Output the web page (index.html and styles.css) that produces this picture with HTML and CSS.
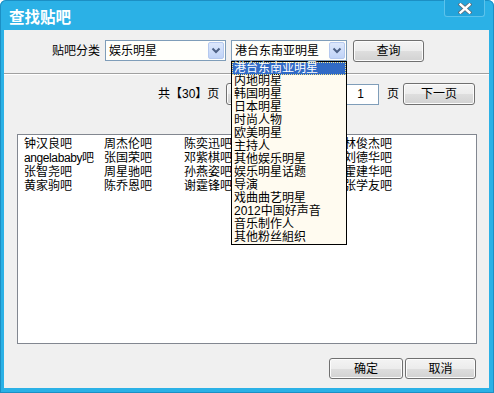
FILE: index.html
```html
<!DOCTYPE html>
<html lang="zh-CN">
<head>
<meta charset="utf-8">
<title>查找贴吧</title>
<link rel="stylesheet" href="styles.css">
</head>
<body>
<div class="window">
  <div class="titlebar">
    <span class="title">查找贴吧</span>
    <span class="close"><svg width="14" height="11" viewBox="0 0 14 11"><path d="M2.5 1.5 L11.5 9.5 M11.5 1.5 L2.5 9.5" stroke="#5a6b78" stroke-width="4" stroke-linecap="square"/><path d="M2.5 1.5 L11.5 9.5 M11.5 1.5 L2.5 9.5" stroke="#fff" stroke-width="2.4" stroke-linecap="square"/></svg></span>
  </div>
  <div class="client">
    <div class="row1">
      <span class="label">贴吧分类</span>
      <div class="combo combo1"><span class="combo-text">娱乐明星</span><span class="combo-btn"><svg width="10" height="7" viewBox="0 0 10 7"><path d="M1.5 1.5 L5 5 L8.5 1.5" fill="none" stroke="#4d6185" stroke-width="2"/></svg></span></div>
      <div class="combo combo2"><span class="combo-text">港台东南亚明星</span><span class="combo-btn"><svg width="10" height="7" viewBox="0 0 10 7"><path d="M1.5 1.5 L5 5 L8.5 1.5" fill="none" stroke="#4d6185" stroke-width="2"/></svg></span></div>
      <button class="btn btn-query">查询</button>
    </div>
    <div class="sep"></div>
    <div class="row2">
      <span class="pages">共【30】页</span>
      <button class="btn btn-prev">上一页</button>
      <div class="pageinput">1</div>
      <span class="ye">页</span>
      <button class="btn btn-next">下一页</button>
    </div>
    <div class="listbox">
      <span>钟汉良吧</span><span>周杰伦吧</span><span>陈奕迅吧</span><span>王力宏吧</span><span>林俊杰吧</span>
      <span class="latin">angelababy吧</span><span>张国荣吧</span><span>邓紫棋吧</span><span>李易峰吧</span><span>刘德华吧</span>
      <span>张智尧吧</span><span>周星驰吧</span><span>孙燕姿吧</span><span>杨幂吧</span><span>霍建华吧</span>
      <span>黄家驹吧</span><span>陈乔恩吧</span><span>谢霆锋吧</span><span>胡歌吧</span><span>张学友吧</span>
    </div>
    <div class="footer">
      <button class="btn btn-ok">确定</button>
      <button class="btn btn-cancel">取消</button>
    </div>
    <ul class="dropdown">
      <li class="sel">港台东南亚明星</li>
      <li>内地明星</li>
      <li>韩国明星</li>
      <li>日本明星</li>
      <li>时尚人物</li>
      <li>欧美明星</li>
      <li>主持人</li>
      <li>其他娱乐明星</li>
      <li>娱乐明星话题</li>
      <li>导演</li>
      <li>戏曲曲艺明星</li>
      <li>2012中国好声音</li>
      <li>音乐制作人</li>
      <li>其他粉丝組织</li>
    </ul>
  </div>
</div>
</body>
</html>
```
FILE: styles.css
```css
html, body {
  margin: 0;
  padding: 0;
  background: #ffffff;
}
body {
  font-family: "Liberation Sans", "Noto Sans CJK SC", sans-serif;
  font-size: 12px;
  color: #000;
}
.window {
  width: 494px;
  height: 393px;
  box-sizing: border-box;
  background: #2bb1e6;
  border-radius: 6px 6px 0 0;
  display: flex;
  flex-direction: column;
  box-shadow: inset 0 0 0 1px #1c8fc4;
}
.titlebar {
  height: 30px;
  position: relative;
  flex: none;
}
.title {
  display: block;
  padding-left: 9px;
  line-height: 32px;
  font-family: "Noto Sans CJK SC", sans-serif;
  font-size: 15.5px;
  font-weight: bold;
  color: #fff;
}
.close {
  position: absolute;
  top: 0;
  right: 9px;
  width: 41px;
  height: 17px;
  box-sizing: border-box;
  background: #22a4dc;
  border: 1px solid #5cc3ec;
  border-top: none;
  border-radius: 0 0 3px 3px;
  display: flex;
  align-items: center;
  justify-content: center;
}
.client {
  flex: 1;
  margin: 0 5px 5px 4px;
  background: #f0f0f0;
  position: relative;
  display: flex;
  flex-direction: column;
}
.row1 {
  display: flex;
  align-items: center;
  height: 22px;
  margin-top: 10px;
  padding-left: 48px;
}
.label {
  width: 48px;
  line-height: 16px;
  margin-right: 5px;
  white-space: nowrap;
}
.combo {
  height: 21px;
  box-sizing: border-box;
  border: 1px solid #7f9db9;
  background: #fffffb;
  display: flex;
  align-items: center;
  padding: 1px;
  align-self: flex-start;
}
.combo1 { width: 121px; margin-right: 5px; }
.combo2 { width: 116px; margin-right: 6px; }
.combo-text {
  flex: 1;
  padding-left: 2px;
  line-height: 16px;
  white-space: nowrap;
}
.combo-btn {
  width: 16px;
  height: 17px;
  box-sizing: border-box;
  border: 1px solid #b5c9ef;
  border-radius: 2px;
  background: linear-gradient(#dde8fc, #c0d3f7);
  display: flex;
  align-items: center;
  justify-content: center;
}
.btn {
  font-family: inherit;
  font-size: 12px;
  height: 22px;
  padding: 0;
  box-sizing: border-box;
  border: 1px solid #707070;
  border-radius: 3px;
  background: linear-gradient(#f4f4f4, #ececec 50%, #dedede 51%, #d2d2d2);
  box-shadow: inset 0 0 0 1px #fcfcfc;
  color: #000;
  line-height: 16px;
}
.btn-query { width: 71px; }
.sep {
  height: 0;
  margin-top: 11px;
  border-top: 1px solid #a0a0a0;
  border-bottom: 1px solid #ffffff;
}
.row2 {
  display: flex;
  align-items: center;
  height: 22px;
  margin-top: 8px;
  padding-left: 154px;
}
.pages {
  width: 68px;
  line-height: 16px;
  white-space: nowrap;
}
.btn-prev { width: 71px; margin-right: 6px; }
.pageinput {
  width: 76px;
  height: 21px;
  box-sizing: border-box;
  border: 1px solid #7f9db9;
  background: #fff;
  text-align: right;
  padding-right: 14px;
  line-height: 19px;
}
.ye {
  margin-left: 8px;
  margin-right: 4px;
  line-height: 16px;
}
.btn-next { width: 72px; }
.listbox {
  margin: 29px 0 0 13px;
  width: 460px;
  height: 210px;
  box-sizing: border-box;
  border: 1px solid #828790;
  background: #fff;
  padding: 2px 0 0 6px;
  display: grid;
  grid-template-columns: repeat(5, 80px);
  grid-auto-rows: 14px;
  align-content: start;
}
.listbox span {
  line-height: 14px;
  white-space: nowrap;
}
.listbox .latin {
  letter-spacing: -0.4px;
}
.footer {
  display: flex;
  justify-content: flex-end;
  gap: 2px;
  margin-top: 14px;
  padding-right: 13px;
}
.btn-ok { width: 74px; height: 21px; }
.btn-cancel { width: 71px; height: 21px; }
.dropdown {
  position: absolute;
  left: 227px;
  top: 31px;
  width: 116px;
  box-sizing: border-box;
  margin: 0;
  padding: 0;
  list-style: none;
  border: 1px solid #000;
  background: #fffbf0;
}
.dropdown li {
  height: 13px;
  line-height: 13px;
  padding-left: 2px;
  white-space: nowrap;
  box-sizing: border-box;
}
.dropdown li.sel {
  background: #316ac5;
  color: #fff;
  outline: 1px dotted #f5e48c;
  outline-offset: -1px;
}
```
